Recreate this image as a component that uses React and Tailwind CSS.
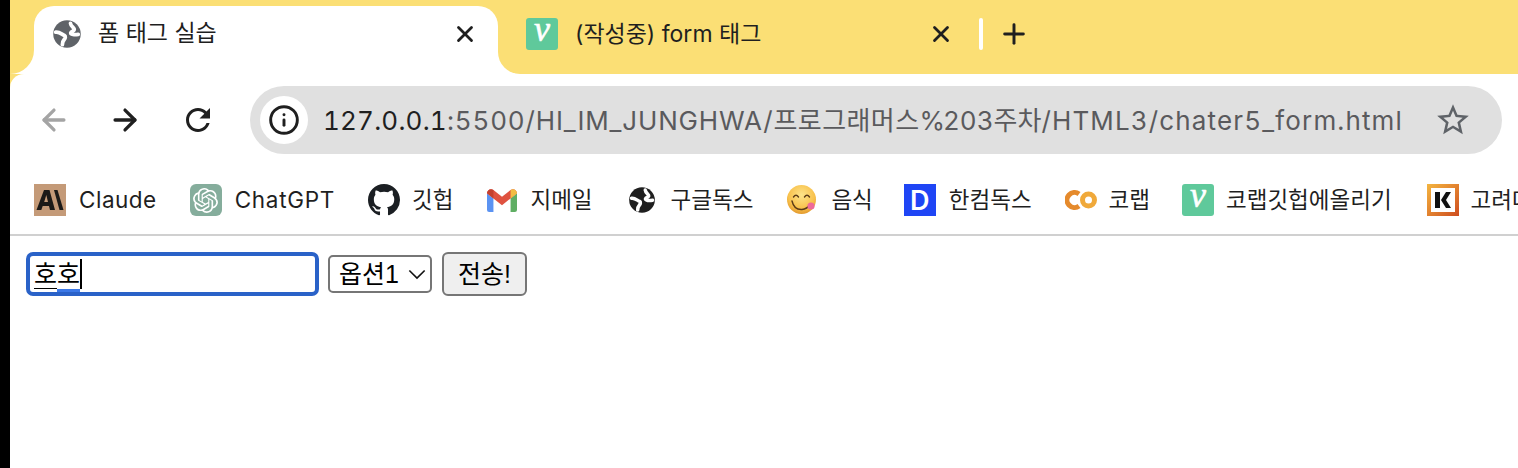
import { X, Plus, ArrowLeft, ArrowRight, Info } from 'lucide-react'
import { SiOpenai } from 'react-icons/si'

function Globe({ className, color }) {
  return (
    <svg viewBox="0 0 24 24" className={className}>
      <circle cx="12" cy="12" r="11" fill={color} />
      <g fill="none" stroke="#ffffff" strokeWidth="3" strokeLinecap="round" strokeLinejoin="round">
        <path d="M3 10.500C6 10 8 12.500 10 13.200 11 13.700 10.800 15.300 9.700 16.500 8.800 17.500 8.300 19 8.300 20.500" />
        <path d="M14.800 3.500C15 6 18 7 17.800 8.500 17.500 10 15.500 9.500 15 11 14.800 12.500 18 12.800 21 12.300" />
      </g>
    </svg>
  )
}

function VelogIcon() {
  return (
    <div className="w-8 h-8 shrink-0 rounded-[3px] bg-[#5fc99b] flex items-center justify-center text-white italic text-[36px] leading-none pb-[10px] [-webkit-text-stroke:0.6px_white] font-['Liberation_Serif',serif]">
      v
    </div>
  )
}

function ClaudeIcon() {
  return (
    <svg viewBox="0 0 32 32" className="w-8 h-8 shrink-0">
      <rect width="32" height="32" fill="#c49a78" />
      <path d="M2.500 26 10 6h5.500l5.500 20h-5l-1-4H8.700l-1.400 4zM10.200 18h3.800L12.300 11z" fill="#1c1a18" fillRule="evenodd" />
      <path d="M20 6h3.500l6 20h-4z" fill="#1c1a18" />
    </svg>
  )
}

function ChatGptIcon() {
  return (
    <div className="w-8 h-8 shrink-0 rounded-[6px] bg-[#85ad9c] flex items-center justify-center text-white">
      <SiOpenai size={25} />
    </div>
  )
}

function GithubIcon() {
  return (
    <svg viewBox="0 0 16 16" className="w-8 h-8 shrink-0" fill="#1b1f23">
      <path d="M8 0C3.580 0 0 3.580 0 8c0 3.540 2.290 6.530 5.470 7.590.4.070.55-.17.55-.38 0-.19-.01-.82-.01-1.490-2.010.37-2.530-.49-2.690-.94-.09-.23-.48-.94-.82-1.130-.28-.15-.68-.52-.01-.53.630-.01 1.080.58 1.230.82.720 1.210 1.870.87 2.330.66.070-.52.280-.87.510-1.070-1.780-.2-3.640-.89-3.640-3.950 0-.87.310-1.590.82-2.150-.08-.2-.36-1.020.08-2.120 0 0 .670-.21 2.200.82.640-.18 1.320-.27 2-.27s1.360.09 2 .27c1.530-1.040 2.200-.82 2.200-.82.440 1.100.160 1.920.080 2.120.510.560.820 1.270.820 2.150 0 3.070-1.870 3.750-3.650 3.950.290.250.540.730.540 1.480 0 1.070-.010 1.930-.010 2.200 0 .210.150.460.550.380A8.010 8.010 0 0 0 16 8c0-4.420-3.580-8-8-8z" />
    </svg>
  )
}

function GmailIcon() {
  return (
    <svg viewBox="0 0 28 22" preserveAspectRatio="none" className="w-[30px] h-[23px] shrink-0">
      <path d="M0 4v16a2 2 0 0 0 2 2h4V9z" fill="#5b93f2" />
      <path d="M22 9v13h4a2 2 0 0 0 2-2V4z" fill="#5fae63" />
      <path d="M0 4c0-3 3.500-5 6-3l8 6.500L22 1c2.500-2 6 0 6 3l-6 5-8 6.500L6 9z" fill="#df5240" />
      <path d="M22 1c2.500-2 6 0 6 3l-6 5z" fill="#f2bd42" />
      <path d="M0 4c0-3 3.500-5 6-3v8z" fill="#c4402f" />
    </svg>
  )
}

function EmojiIcon() {
  return (
    <svg viewBox="0 0 32 32" className="w-8 h-8 shrink-0">
      <defs>
        <radialGradient id="face" cx="50%" cy="35%" r="65%">
          <stop offset="0%" stopColor="#fde48a" />
          <stop offset="70%" stopColor="#f8c14c" />
          <stop offset="100%" stopColor="#e39a2e" />
        </radialGradient>
      </defs>
      <circle cx="15.500" cy="15.500" r="14.500" fill="url(#face)" />
      <path d="M7.500 13q2.500-3.500 5 0M18.500 13q2.500-3.500 5 0" fill="none" stroke="#5a3a17" strokeWidth="1.400" strokeLinecap="round" />
      <path d="M6 17q2 9 10 8.500 5-.5 8-5" fill="none" stroke="#5a3a17" strokeWidth="1.400" strokeLinecap="round" />
      <circle cx="25" cy="22" r="3.600" fill="#ee6a9a" />
    </svg>
  )
}

function ColabIcon() {
  return (
    <svg viewBox="0 0 32 20" className="w-8 h-5 shrink-0" fill="none" strokeWidth="5">
      <path d="M14 4a7.500 7.500 0 1 0 0 12" stroke="#e58a2c" />
      <circle cx="23.500" cy="10" r="6" stroke="#f0a93a" />
    </svg>
  )
}

function KIcon() {
  return (
    <div className="w-8 h-8 shrink-0 p-[4px] bg-linear-to-br from-[#f3b540] to-[#cd4b1f]">
      <div className="w-full h-full bg-white flex items-center justify-center">
        <svg viewBox="0 0 20 20" className="w-5 h-5" fill="#111111">
          <path d="M2 2h5v16H2zM8 10l5-8h5l-5 8 5 8h-5z" />
        </svg>
      </div>
    </div>
  )
}

function HancomIcon() {
  return (
    <div className="w-8 h-8 shrink-0 bg-[#1f45f5] flex items-center justify-center text-white font-semibold text-[27px] leading-none">
      D
    </div>
  )
}

function Bookmark({ icon, label, className, labelClass }) {
  return (
    <div className={'flex items-center shrink-0 ' + className}>
      {icon}
      <span className={'whitespace-nowrap ' + (labelClass || '')}>{label}</span>
    </div>
  )
}

export default function App() {
  return (
    <div className="flex h-[468px] w-[1518px] overflow-hidden bg-white font-['Inter','Noto_Sans_CJK_KR',sans-serif] text-[#1f1f1f]">
      <div className="w-[10px] shrink-0 bg-black" />
      <div className="flex-1 min-w-0 flex flex-col">
        {/* tab strip */}
        <div className="flex h-[74px] bg-white">
          <div className="w-[24px] bg-[#fbdf75] rounded-br-[24px]" />
          <div className="w-[464px] bg-[#fbdf75] pt-[6px]">
            <div className="h-full bg-white rounded-t-[20px] flex items-center pl-[17px] pr-[20px] pb-[13px]">
              <Globe className="w-[30px] h-[30px] shrink-0 ml-px" color="#5f6368" />
              <span className="ml-[16px] text-[23px] flex-1">폼 태그 실습</span>
              <X className="w-[26px] h-[26px]" strokeWidth={2.600} />
            </div>
          </div>
          <div className="flex-1 bg-[#fbdf75] rounded-bl-[22px] flex items-center pl-[28px] pb-[6px]">
            <VelogIcon />
            <span className="ml-[17px] text-[23px] w-[353px]">(작성중) form 태그</span>
            <X className="w-[26px] h-[26px]" strokeWidth={2.600} />
            <div className="w-[4px] h-8 bg-white rounded-full ml-[25px]" />
            <Plus className="w-8 h-8 ml-[15px]" strokeWidth={2.200} />
          </div>
        </div>

        {/* toolbar */}
        <div className="bg-[#fbdf75]">
          <div className="h-[92px] bg-white rounded-tl-[14px] flex items-center pl-[27px] pr-[16px]">
            <ArrowLeft className="w-[34px] h-[34px] text-[#a4a4a4]" strokeWidth={2.300} />
            <ArrowRight className="w-[34px] h-[34px] ml-[37px]" strokeWidth={2.300} />
            <svg viewBox="0 0 24 24" className="w-9 h-9 ml-[38px]" fill="currentColor">
              <path d="M17.650 6.350C16.200 4.900 14.210 4 12 4c-4.420 0-7.990 3.580-7.990 8s3.570 8 7.990 8c3.730 0 6.840-2.550 7.730-6h-2.080c-.82 2.330-3.040 4-5.650 4-3.310 0-6-2.690-6-6s2.690-6 6-6c1.660 0 3.140.69 4.220 1.780L13 11h7V4l-2.350 2.350z" />
            </svg>
            <div className="ml-[34px] flex-1 h-[68px] rounded-full bg-[#e0e0e0] flex items-center pl-[10px] pr-[30px]">
              <div className="w-[48px] h-[48px] rounded-full bg-white flex items-center justify-center shrink-0">
                <Info className="w-8 h-8" strokeWidth={2.200} />
              </div>
              <div className="ml-[15px] flex-1 text-[26px] tracking-[1.150px] tabular-nums whitespace-nowrap text-[#5a5a5d]">
                <span className="text-[#1f1f1f] tracking-[0.200px]">127.0.0.1</span>
                <span className="tracking-[0.850px]">:5500/HI_IM_JUNGHWA/</span>
                <span className="tracking-[0.400px]">프로그래머스</span>
                <span className="tracking-[-2px]">%</span>
                <span className="tracking-normal">203주차</span>/HTML3/chater5_form.html
              </div>
              <svg viewBox="0 0 24 24" className="w-[38px] h-[38px] text-[#5f6368] shrink-0" fill="currentColor">
                <path d="M22 9.240l-7.190-.62L12 2 9.190 8.630 2 9.240l5.460 4.730L5.820 21 12 17.270 18.180 21l-1.630-7.030L22 9.240zM12 15.400l-3.760 2.270 1-4.280-3.320-2.880 4.380-.38L12 6.100l1.710 4.040 4.380.38-3.320 2.880 1 4.280L12 15.400z" />
              </svg>
            </div>
          </div>
        </div>

        {/* bookmarks */}
        <div className="h-[70px] flex items-center pl-[24px] text-[22.500px] overflow-hidden border-b-2 border-[#d0d0d0]">
          <Bookmark icon={<ClaudeIcon />} label="Claude" labelClass="tracking-[0.500px]" className="gap-[13px] mr-[33px]" />
          <Bookmark icon={<ChatGptIcon />} label="ChatGPT" labelClass="tracking-[0.700px]" className="gap-[13px] mr-[33px]" />
          <Bookmark icon={<GithubIcon />} label="깃헙" className="gap-[12px] mr-[34px]" />
          <Bookmark icon={<GmailIcon />} label="지메일" className="gap-[13px] mr-[35px]" />
          <Bookmark icon={<Globe className="w-7 h-7 shrink-0" color="#1f1f1f" />} label="구글독스" className="gap-[15px] mr-[33px]" />
          <Bookmark icon={<EmojiIcon />} label="음식" className="gap-[13px] mr-[31px]" />
          <Bookmark icon={<HancomIcon />} label="한컴독스" className="gap-[13px] mr-[33px]" />
          <Bookmark icon={<ColabIcon />} label="코랩" className="gap-[12px] mr-[32px]" />
          <Bookmark icon={<VelogIcon />} label="코랩깃헙에올리기" className="gap-[12px] mr-[35px]" />
          <Bookmark icon={<KIcon />} label="고려대학교" className="gap-[12px]" />
        </div>

        {/* page content */}
        <div className="flex-1 px-[16px] pt-[16px] font-['Liberation_Sans','Noto_Sans_CJK_KR',sans-serif] text-black">
          <form className="flex items-center gap-[9px] h-[44px]">
            <div className="w-[293px] h-[44px] border-[4px] border-[#2a62c8] rounded-[7px] pl-[4px] flex items-center text-[25px]">
              <span className="relative leading-none">
                호
                <span className="absolute left-0 right-0 -bottom-[2px] h-px bg-black" />
              </span>
              <span className="relative leading-none">
                호
                <span className="absolute left-0 right-0 -bottom-[5px] h-[3px] bg-[#3b78e7]" />
              </span>
              <span className="w-[2px] h-[30px] bg-black" />
            </div>
            <div className="w-[104px] h-[38px] border-2 border-[#767676] rounded-[5px] bg-white flex items-center pl-[9px] text-[25px]">
              <span className="flex-1 leading-none">옵션1</span>
              <svg viewBox="0 0 20 12" className="w-[18px] h-[11px] mr-[4px]" fill="none" stroke="#111111" strokeWidth="1.800">
                <path d="M1.500 1.500 10 10l8.500-8.500" />
              </svg>
            </div>
            <button type="button" className="ml-px w-[85px] h-[44px] border-2 border-[#767676] rounded-[6px] bg-[#efefef] text-[25px] leading-none">
              전송!
            </button>
          </form>
        </div>
      </div>
    </div>
  )
}
